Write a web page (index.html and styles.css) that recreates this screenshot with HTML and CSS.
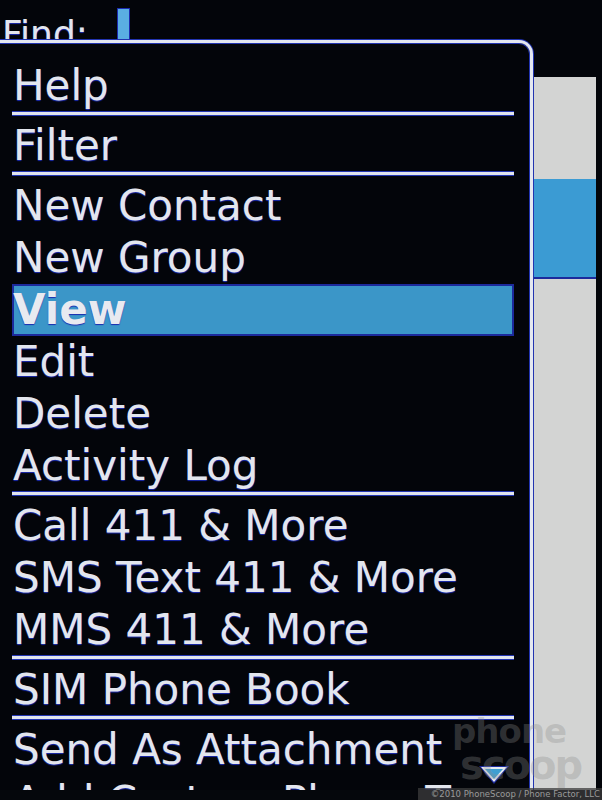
FILE: index.html
```html
<!DOCTYPE html>
<html>
<head>
<meta charset="utf-8">
<link rel="stylesheet" href="styles.css">
</head>
<body>
<div class="screen">
  <div class="find-bar">
    <span class="find-label">Find:</span>
    <span class="cursor"></span>
  </div>
  <div class="list">
    <div class="list-row first"></div>
    <div class="list-row selected"></div>
    <div class="list-row rest"></div>
  </div>

  <div class="menu">
    <div class="menu-items">
      <div class="item">Help</div>
      <div class="sep"></div>
      <div class="item">Filter</div>
      <div class="sep"></div>
      <div class="item">New Contact</div>
      <div class="item">New Group</div>
      <div class="item active">View</div>
      <div class="item">Edit</div>
      <div class="item">Delete</div>
      <div class="item">Activity Log</div>
      <div class="sep"></div>
      <div class="item">Call 411 &amp; More</div>
      <div class="item">SMS Text 411 &amp; More</div>
      <div class="item">MMS 411 &amp; More</div>
      <div class="sep"></div>
      <div class="item">SIM Phone Book</div>
      <div class="sep"></div>
      <div class="item">Send As Attachment</div>
      <div class="item">Add Custom Phone Tune</div>
    </div>
  </div>

  <div class="scroll-arrow">
    <svg width="34" height="22" viewBox="0 0 34 22">
      <polygon points="2,2 32,2 17,20" fill="#1c2a9c"/>
      <polygon points="4,3 30,3 17,18" fill="#e6eaf2"/>
      <polygon points="8,5 26,5 17,15" fill="#3f9fd2"/>
    </svg>
  </div>

  <div class="watermark">
    <span class="wm-phone">phone</span>
    <span class="wm-scoop">scoop</span>
  </div>
  <div class="bezel"></div>
  <div class="copyright">©2010 PhoneScoop / Phone Factor, LLC</div>
</div>
</body>
</html>
```

FILE: styles.css
```css
html, body {
  margin: 0;
  padding: 0;
  background: #03050a;
}

.screen {
  position: relative;
  width: 602px;
  height: 800px;
  overflow: hidden;
  background: #03050a;
  display: flex;
  flex-direction: column;
  font-family: "DejaVu Sans", "Liberation Sans", sans-serif;
}

.find-bar {
  height: 77px;
  display: flex;
  align-items: flex-start;
  padding-left: 2px;
  flex: none;
}

.find-label {
  font-size: 36px;
  line-height: 42px;
  margin-top: 13px;
  color: #e3e6ee;
  text-shadow: 0 1px 1px #1b2bb0;
}

.cursor {
  width: 11px;
  height: 31px;
  margin-top: 8px;
  margin-left: 29px;
  background: #5aaee2;
  border: 1px solid #1b2bb0;
}

.list {
  flex: 1;
  margin-right: 6px;
  display: flex;
  flex-direction: column;
  background: #d3d4d3;
}

.list-row.first {
  height: 102px;
}

.list-row.selected {
  height: 98px;
  background: #3b9bd3;
  border-bottom: 2px solid #1c2a9c;
}

.list-row.rest {
  flex: 1;
}

.menu {
  position: absolute;
  top: 40px;
  left: -10px;
  width: 543px;
  height: 760px;
  box-sizing: border-box;
  background: #03050a;
  border: 3px solid #e4e8f0;
  border-bottom: none;
  border-top-right-radius: 14px;
  box-shadow: 0 0 0 1px #2234b0, inset 0 0 0 1px #2234b0;
  padding: 17px 16px 0 19px;
}

.menu-items {
  display: flex;
  flex-direction: column;
  height: 731px;
  overflow: hidden;
}

.item {
  flex: none;
  height: 52px;
  line-height: 52px;
  font-size: 42px;
  padding-left: 1px;
  color: #e3e6ee;
  white-space: nowrap;
  text-shadow: 0 1px 1px #1b2bb0;
}

.item.active {
  background: #3b96c8;
  box-shadow: inset 0 0 0 2px #1c2a9c;
  font-weight: bold;
  color: #e8eaf0;
}

.sep {
  flex: none;
  height: 3px;
  margin-bottom: 5px;
  background: #e0e4ee;
  box-shadow: 0 1px 0 #2234b0, 0 -1px 0 #2234b0;
}

.scroll-arrow {
  position: absolute;
  left: 477px;
  top: 764px;
  width: 34px;
  height: 22px;
}

.scroll-arrow svg {
  display: block;
}

.watermark {
  position: absolute;
  left: 452px;
  top: 714px;
  display: flex;
  flex-direction: column;
  font-family: "DejaVu Sans", sans-serif;
  font-weight: bold;
  color: rgba(140, 140, 140, 0.32);
  line-height: 34px;
  pointer-events: none;
}

.wm-phone {
  font-size: 34px;
  letter-spacing: -1px;
}

.wm-scoop {
  font-size: 40px;
  margin-left: 8px;
  letter-spacing: -2px;
}

.bezel {
  position: absolute;
  left: 0;
  bottom: 0;
  width: 602px;
  height: 10px;
  background: #05070c;
}

.copyright {
  position: absolute;
  right: 0;
  bottom: 0;
  width: 184px;
  height: 12px;
  line-height: 12px;
  font-size: 8.5px;
  text-align: right;
  padding-right: 2px;
  box-sizing: border-box;
  white-space: nowrap;
  font-family: "DejaVu Sans", sans-serif;
  color: #9a9a9a;
  background: rgba(60, 60, 60, 0.75);
}
```
